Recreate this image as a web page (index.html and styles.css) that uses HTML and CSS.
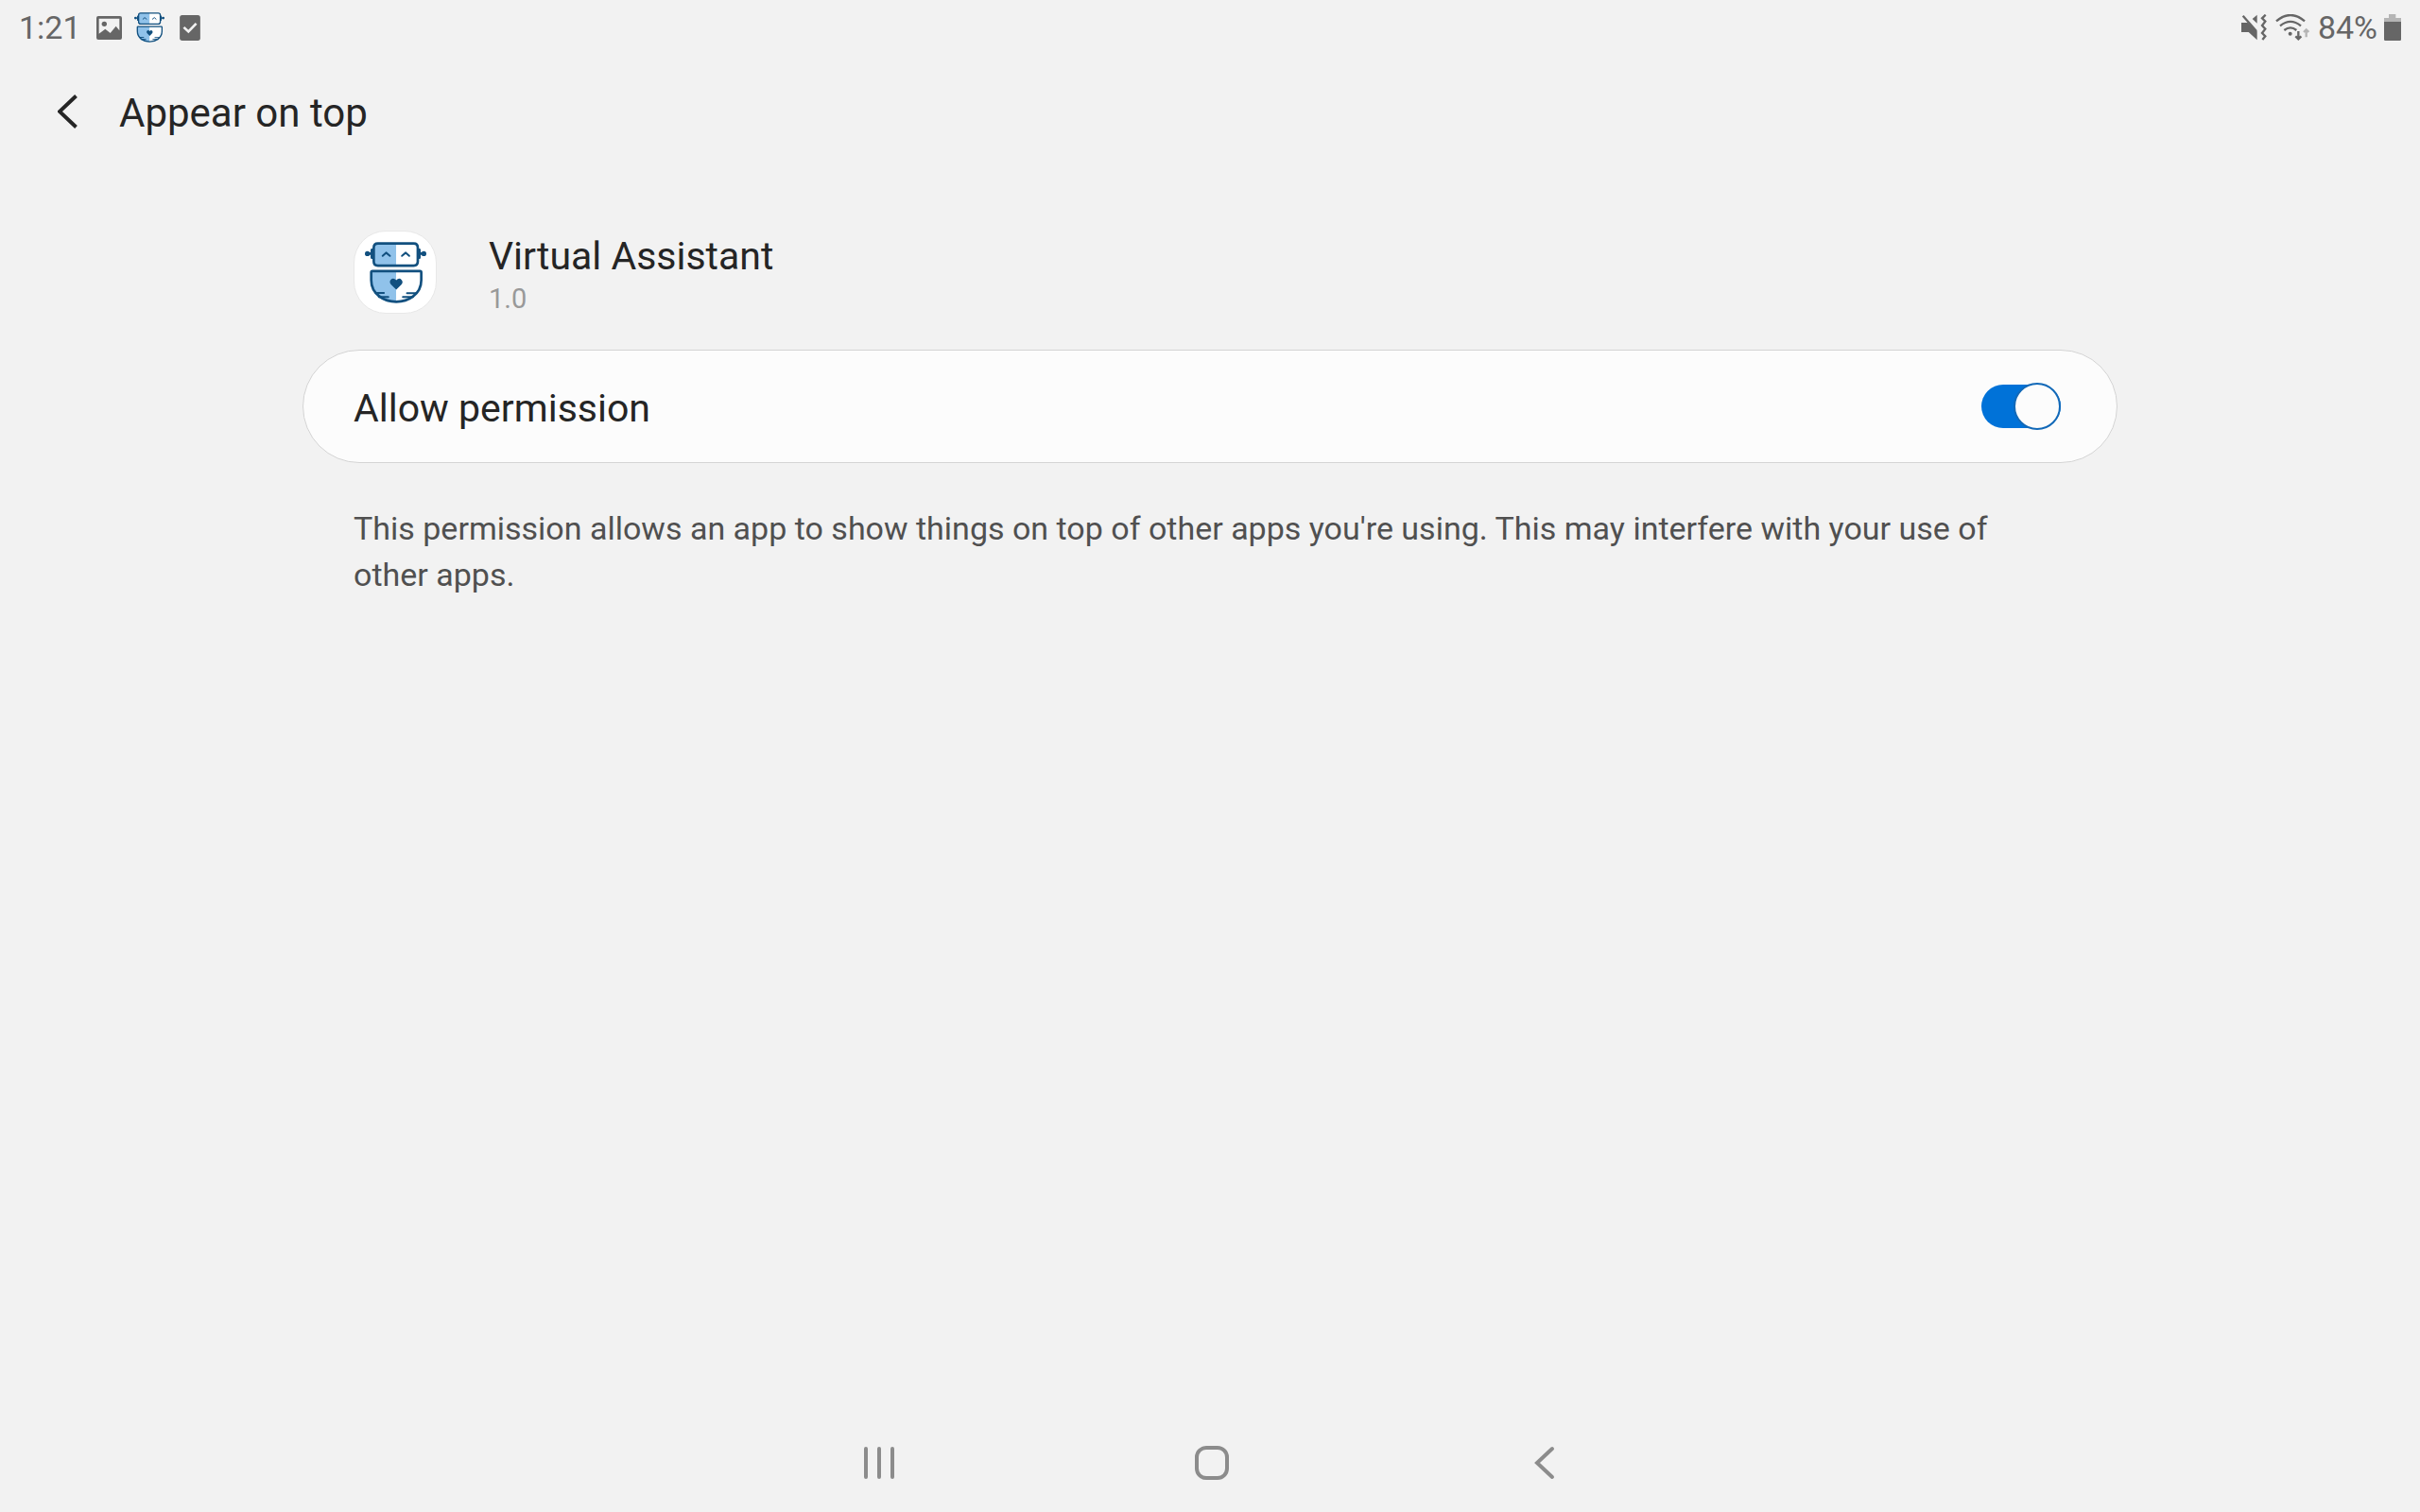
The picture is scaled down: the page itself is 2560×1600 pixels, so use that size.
FILE: index.html
```html
<!DOCTYPE html>
<html lang="en">
<head>
<meta charset="utf-8">
<meta name="viewport" content="width=device-width, initial-scale=1">
<title>Appear on top</title>
<link rel="stylesheet" href="styles.css">
</head>
<body>
<svg class="sprite" aria-hidden="true">
  <symbol id="robot" viewBox="77 77 194 194">
    <path class="robot-tint" d="M112 82h64v70h-64l-6-8V90zM96 168h80v100q-50 0-68-30-12-18-12-40z"/>
    <path class="robot-paper" d="M176 82h60l8 8v54l-8 8h-60zM176 168h80v30q0 22-12 40-18 30-68 30z"/>
    <path class="robot-line" d="M118 82h113q13 0 13 13v44q0 13-13 13H118q-13 0-13-13V95q0-13 13-13zM103 102h-4v25h4M245 102h4v25h-4M85 114h14M249 114h14"/>
    <path class="robot-line" d="M101 169h150q4 0 4 4v25q0 32-26 51-22 17-53 17t-53-17q-26-19-26-51v-25q0-4 4-4z"/>
    <path class="robot-line robot-thin" d="M133 121l11-10 12 10M194 121l12-10 11 10M111 238h26M121 251h30M210 239h29M197 251h32"/>
    <path class="robot-fill" d="M176 228l-16-16q-7-8-2-15 9-9 18 1 9-10 17-1 6 7-1 15z"/>
    <circle class="robot-fill" cx="85" cy="114" r="8"/>
    <circle class="robot-fill" cx="263" cy="114" r="8"/>
  </symbol>
</svg>

<div class="status-bar">
  <time class="status-time">1:21</time>
  <svg class="status-image" viewBox="306 48 81 75" aria-hidden="true">
    <path fill-rule="evenodd" d="M312 48h69q6 0 6 6v63q0 6-6 6h-69q-6 0-6-6V54q0-6 6-6zM314 56v48l20-15 16 13 18-22 11 14V56z"/>
    <circle cx="331" cy="73" r="8"/>
  </svg>
  <svg class="status-robot" aria-hidden="true"><use href="#robot"/></svg>
  <svg class="status-check" viewBox="571 44 66 82" aria-hidden="true">
    <rect x="571" y="44" width="66" height="82" rx="8"/>
    <path class="check-mark" d="M584 83l15 14 25-26"/>
  </svg>
  <div class="status-right">
    <svg class="status-mute" viewBox="60 42 81 84" aria-hidden="true">
      <path d="M60 69h20l30 28v27L83 99H60zM95 57l15-13v27z"/>
      <path class="status-stroke" d="M65 47l43 49"/>
      <path class="status-stroke" d="M137 44l-11 11 10 10-10 13 10 11-10 13 10 10-9 11"/>
    </svg>
    <svg class="status-wifi" viewBox="168 42 108 84" aria-hidden="true">
      <path class="status-stroke" d="M171 64q45-38 90 0M183 79q33-27 66 0M196 93q20-16 39 0"/>
      <circle cx="215" cy="104" r="6"/>
      <path class="status-stroke" d="M241 96v25M232 112l9 9 9-9"/>
      <path class="status-stroke faint-stroke" d="M266 115V91M258 99l8-8 8 8"/>
    </svg>
    <span class="status-percent">84%</span>
    <svg class="status-battery" viewBox="516 42 54 84" aria-hidden="true">
      <path class="faint" d="M516 54h15V42h22v12h17v13h-54z"/>
      <path d="M516 66h54v56q0 4-4 4h-46q-4 0-4-4z"/>
    </svg>
  </div>
</div>

<header class="app-bar">
  <button class="back" type="button" aria-label="Navigate up">
    <svg viewBox="0 0 21 36" aria-hidden="true"><path d="M19.500 1.500L2 18l17.500 16.500"/></svg>
  </button>
  <h1 class="title">Appear on top</h1>
</header>

<main class="content">
  <section class="app">
    <div class="app-icon"><svg aria-hidden="true"><use href="#robot"/></svg></div>
    <div class="app-text">
      <h2 class="app-name">Virtual Assistant</h2>
      <p class="app-version">1.0</p>
    </div>
  </section>
  <label class="card">
    <span class="card-label">Allow permission</span>
    <input class="switch" type="checkbox" role="switch" checked>
  </label>
  <p class="description">This permission allows an app to show things on top of other apps you're using. This may interfere with your use of other apps.</p>
</main>

<nav class="nav-bar" aria-label="System">
  <button type="button" aria-label="Recents"><svg viewBox="0 0 36 36" aria-hidden="true"><path d="M4 3v30M18 3v30M32 3v30"/></svg></button>
  <button type="button" aria-label="Home"><svg viewBox="0 0 36 36" aria-hidden="true"><rect x="2" y="2" width="32" height="32" rx="10"/></svg></button>
  <button type="button" aria-label="Back"><svg viewBox="0 0 36 36" aria-hidden="true"><path d="M26 3L10 18l16 15"/></svg></button>
</nav>
</body>
</html>
```
FILE: styles.css
```css
*,
*::before {
  box-sizing: border-box;
}

body {
  margin: 0;
  min-height: 100vh;
  display: flex;
  flex-direction: column;
  background: #f2f2f2;
  color: #252525;
  font-family: Roboto, "Liberation Sans", sans-serif;
}

h1, h2, p {
  margin: 0;
  font-weight: 400;
}

button {
  display: flex;
  align-items: center;
  justify-content: center;
  padding: 0;
  border: 0;
  background: none;
  cursor: pointer;
}

svg {
  display: block;
  flex: none;
}

.sprite {
  position: absolute;
  width: 0;
  height: 0;
}

/* Robot logo */
.robot-tint { fill: #90c2ea; }
.robot-paper { fill: #fff; }
.robot-fill { fill: #12507f; }
.robot-line {
  fill: none;
  stroke: #12507f;
  stroke-width: 8;
  stroke-linecap: round;
  stroke-linejoin: round;
}
.robot-thin { stroke-width: 6; }

/* Status bar */
.status-bar {
  display: flex;
  align-items: center;
  height: 58px;
  padding: 0 20px;
  color: #666;
  fill: #666;
  font-size: 34px;
  line-height: 40px;
}

.status-time { width: 82px; }
.status-image { width: 27px; height: 25px; margin-right: 13px; }
.status-robot { width: 32px; height: 32px; margin-right: 16px; }
.status-check { width: 22px; height: 27px; }
.status-right {
  display: flex;
  align-items: center;
  margin-left: auto;
}
.status-mute { width: 27px; height: 28px; margin-right: 9px; }
.status-wifi { width: 36px; height: 28px; margin-right: 9px; }
.status-percent { margin-right: 7px; }
.status-battery { width: 18px; height: 28px; }
.faint { fill: #b5b5b5; }

.status-stroke,
.check-mark {
  fill: none;
  stroke: #666;
  stroke-width: 7;
}
.faint-stroke {
  stroke: #b5b5b5;
}
.check-mark {
  stroke: #f2f2f2;
  stroke-width: 8;
}

/* App bar */
.app-bar {
  display: flex;
  align-items: center;
  height: 120px;
  padding-left: 40px;
}

.back {
  width: 62px;
  height: 62px;
}
.back svg {
  width: 21px;
  height: 36px;
  fill: none;
  stroke: #252525;
  stroke-width: 4;
}

.title {
  margin-left: 24px;
  padding-top: 3px;
  font-size: 42px;
  line-height: 50px;
}

/* Content */
.content {
  flex: 1;
  width: 75%;
  margin: 0 auto;
}

.app {
  display: flex;
  align-items: center;
  gap: 55px;
  padding: 62px 54px 34px;
}

.app-icon {
  display: flex;
  align-items: center;
  justify-content: center;
  width: 88px;
  height: 88px;
  border: 1px solid #e8e8e8;
  border-radius: 34px;
  background: #fff;
}
.app-icon svg {
  width: 65px;
  height: 65px;
}

.app-text {
  padding-top: 6px;
}
.app-name {
  font-size: 41px;
  line-height: 50px;
}
.app-version {
  color: #999;
  font-size: 29px;
  line-height: 40px;
}

.card {
  display: flex;
  align-items: center;
  justify-content: space-between;
  min-height: 120px;
  padding: 0 59px 0 53px;
  border: 1px solid #d4d4d4;
  border-radius: 60px;
  background: #fcfcfc;
  cursor: pointer;
}
.card-label {
  padding-top: 4px;
  font-size: 41px;
  line-height: 50px;
}

.switch {
  appearance: none;
  display: flex;
  align-items: center;
  justify-content: flex-start;
  width: 84px;
  height: 46px;
  margin: 0;
  border-radius: 23px;
  background: #8f8f8f;
  cursor: pointer;
}
.switch::before {
  content: "";
  flex: none;
  width: 50px;
  height: 50px;
  border: 2px solid #8f8f8f;
  border-radius: 50%;
  background: #fcfcfc;
}
.switch:checked {
  justify-content: flex-end;
  background: #0072d8;
}
.switch:checked::before {
  border-color: #1269b8;
}

.description {
  padding: 45px 110px 0 54px;
  color: #505050;
  font-size: 34px;
  line-height: 49px;
}

/* Navigation bar */
.nav-bar {
  display: flex;
  justify-content: center;
  height: 104px;
  padding-left: 4px;
}
.nav-bar button {
  width: 352px;
  height: 104px;
}
.nav-bar svg {
  width: 36px;
  height: 36px;
  fill: none;
  stroke: #8c8c8c;
  stroke-width: 4;
  stroke-linecap: round;
}
```
